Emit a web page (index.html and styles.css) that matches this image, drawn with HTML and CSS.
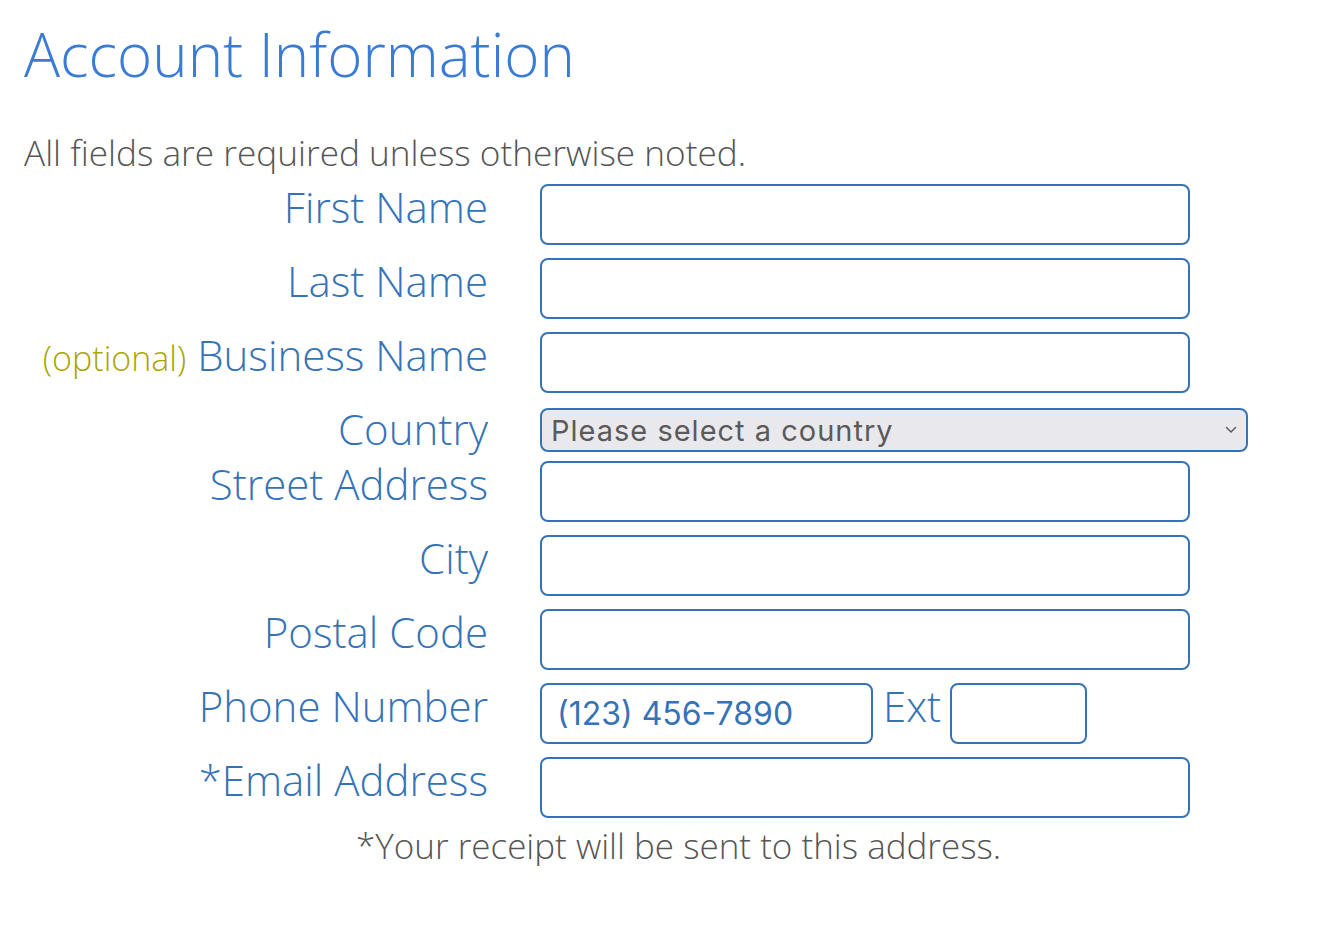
FILE: index.html
```html
<!DOCTYPE html>
<html lang="en">
<head>
<meta charset="utf-8">
<title>Account Information</title>
<link rel="stylesheet" href="styles.css">
</head>
<body>
<main class="page">
  <h1 class="title">Account Information</h1>
  <p class="intro">All fields are required unless otherwise noted.</p>
  <form class="form">
    <div class="row">
      <label class="label" for="fn">First Name</label>
      <input class="field" id="fn" type="text">
    </div>
    <div class="row">
      <label class="label" for="ln">Last Name</label>
      <input class="field" id="ln" type="text">
    </div>
    <div class="row">
      <label class="label" for="bn"><span class="optional">(optional)</span> Business Name</label>
      <input class="field" id="bn" type="text">
    </div>
    <div class="row row-select">
      <label class="label" for="country">Country</label>
      <div class="select" id="country">
        <span class="select-text">Please select a country</span>
        <svg class="chev" width="12" height="8" viewBox="0 0 12 8"><path d="M1.5 1.5 L6 6 L10.5 1.5" fill="none" stroke="#555" stroke-width="1.4" stroke-linecap="round" stroke-linejoin="round"/></svg>
      </div>
    </div>
    <div class="row">
      <label class="label" for="st">Street Address</label>
      <input class="field" id="st" type="text">
    </div>
    <div class="row">
      <label class="label" for="city">City</label>
      <input class="field" id="city" type="text">
    </div>
    <div class="row">
      <label class="label" for="pc">Postal Code</label>
      <input class="field" id="pc" type="text">
    </div>
    <div class="row">
      <label class="label" for="ph">Phone Number</label>
      <div class="phone">
        <input class="field field-phone" id="ph" type="text" placeholder="(123) 456-7890">
        <span class="ext">Ext</span>
        <input class="field field-ext" type="text">
      </div>
    </div>
    <div class="row row-last">
      <label class="label" for="em">*Email Address</label>
      <input class="field" id="em" type="text">
    </div>
    <p class="note">*Your receipt will be sent to this address.</p>
  </form>
</main>
</body>
</html>
```

FILE: styles.css
```css
html, body {
  margin: 0;
  padding: 0;
  background: #ffffff;
}

body {
  font-family: "Open Sans", "Liberation Sans", sans-serif;
  font-weight: 300;
}

.page {
  padding: 18px 0 0 24px;
}

.title {
  margin: 0;
  font-size: 60px;
  font-weight: 300;
  line-height: 72px;
  color: #3a7bd5;
}

.intro {
  margin: 42px 0 12px 0;
  font-size: 35.2px;
  line-height: 40px;
  color: #555555;
}

.form {
  margin: 0;
}

.row {
  display: flex;
  align-items: flex-start;
  gap: 52px;
  margin-bottom: 13px;
}

.label {
  width: 464px;
  flex: none;
  text-align: right;
  font-size: 42px;
  line-height: 46px;
  color: #3573b7;
}

.optional {
  font-size: 34px;
  color: #a8a600;
}

.field {
  box-sizing: border-box;
  width: 650px;
  height: 61px;
  border: 2px solid #3573b7;
  border-radius: 8px;
  background: #ffffff;
  margin: 0;
  padding: 0 14px;
  outline: none;
}

.row-select {
  margin-top: 15px;
  margin-bottom: 9px;
}

.row-select .label {
  line-height: 42px;
}

.select {
  box-sizing: border-box;
  width: 708px;
  height: 44px;
  border: 2px solid #3573b7;
  border-radius: 8px;
  background: #e9e9ed;
  display: flex;
  align-items: center;
  justify-content: space-between;
  padding: 0 9px 0 9px;
}

.select-text {
  font-family: Inter, "Liberation Sans", sans-serif;
  font-weight: 400;
  font-size: 29px;
  letter-spacing: 1px;
  color: #5a5a5a;
}

.phone {
  display: flex;
  align-items: flex-start;
}

.field-phone {
  width: 333px;
  font-family: Inter, "Liberation Sans", sans-serif;
  font-size: 32px;
  font-weight: 400;
  padding-left: 15px;
}

.field-phone::placeholder {
  color: #3573b7;
  opacity: 1;
}

.ext {
  margin: 0 9px 0 10px;
  font-size: 42px;
  line-height: 46px;
  color: #3573b7;
}

.field-ext {
  width: 137px;
}

.row-last {
  margin-bottom: 8px;
}

.note {
  margin: 0;
  padding-left: 332px;
  font-size: 35px;
  line-height: 40px;
  color: #555555;
}
```
